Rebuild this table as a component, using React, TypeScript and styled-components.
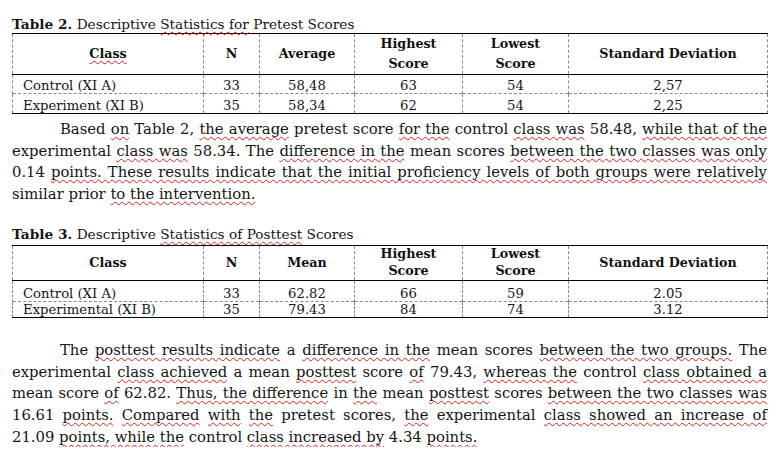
import React from "react";
import styled, { createGlobalStyle } from "styled-components";

const Global = createGlobalStyle`
  html, body { margin: 0; padding: 0; background: #ffffff; }
  body { font-family: "DejaVu Serif", "Liberation Serif", serif; color: #151515; }
`;

const Page = styled.div`
  width: 755px;
  padding: 15px 16px 0 12px;
`;

const Caption = styled.div<{ $gap: number }>`
  font-size: 13.7px;
  line-height: 18px;
  margin-top: ${(p) => p.$gap}px;
  white-space: nowrap;
`;

const Label = styled.b`
  font-weight: 700;
`;

const Misspelt = styled.span`
  text-decoration-line: underline;
  text-decoration-style: wavy;
  text-decoration-color: #e0201c;
  text-decoration-thickness: 1px;
  text-underline-offset: 2px;
  text-decoration-skip-ink: none;
`;

const Table = styled.table<{ $gap: number }>`
  width: 755px;
  margin-top: ${(p) => p.$gap}px;
  border-collapse: collapse;
  table-layout: fixed;
  border-top: 1px solid #000;
  border-bottom: 1px solid #000;
  border-left: 1px dashed #8a8a8a;
  border-right: 1px dashed #8a8a8a;
`;

const HeadRow = styled.tr<{ $h: number }>`
  height: ${(p) => p.$h}px;
  border-bottom: 1px solid #000;
`;

const HeadCell = styled.th<{ $lh: number }>`
  font-size: 12.7px;
  font-weight: 700;
  line-height: ${(p) => p.$lh}px;
  text-align: center;
  vertical-align: middle;
  padding: 0 4px;
  border-left: 1px dashed #8a8a8a;
  color: #111;
`;

const BodyRow = styled.tr<{ $h: number }>`
  height: ${(p) => p.$h}px;
  border-top: 1px dashed #8a8a8a;
`;

const Cell = styled.td<{ $left?: boolean }>`
  font-size: 13.2px;
  line-height: 15px;
  text-align: ${(p) => (p.$left ? "left" : "center")};
  vertical-align: bottom;
  padding: 0 0 0 ${(p) => (p.$left ? "10px" : "0")};
  border-left: 1px dashed #8a8a8a;
  white-space: nowrap;
`;

const Paragraph = styled.div<{ $gap: number }>`
  margin-top: ${(p) => p.$gap}px;
  font-size: 14.8px;
  line-height: 21.7px;
`;

const Line = styled.div<{ $first?: boolean; $last?: boolean }>`
  text-align: justify;
  text-align-last: ${(p) => (p.$last ? "left" : "justify")};
  padding-left: ${(p) => (p.$first ? "48px" : "0")};
`;

type Row = string[];

function StatTable({
  gap,
  headHeight,
  headLine,
  meanLabel,
  classLabel,
  rows,
  rowHeights,
}: {
  gap: number;
  headHeight: number;
  headLine: number;
  meanLabel: string;
  classLabel: React.ReactNode;
  rows: Row[];
  rowHeights: number[];
}) {
  return (
    <Table $gap={gap}>
      <colgroup>
        <col style={{ width: 191 }} />
        <col style={{ width: 56 }} />
        <col style={{ width: 95 }} />
        <col style={{ width: 108 }} />
        <col style={{ width: 106 }} />
        <col style={{ width: 199 }} />
      </colgroup>
      <thead>
        <HeadRow $h={headHeight}>
          <HeadCell $lh={headLine}>{classLabel}</HeadCell>
          <HeadCell $lh={headLine}>N</HeadCell>
          <HeadCell $lh={headLine}>{meanLabel}</HeadCell>
          <HeadCell $lh={headLine}>
            Highest
            <br />
            Score
          </HeadCell>
          <HeadCell $lh={headLine}>
            Lowest
            <br />
            Score
          </HeadCell>
          <HeadCell $lh={headLine}>Standard Deviation</HeadCell>
        </HeadRow>
      </thead>
      <tbody>
        {rows.map((r, i) => (
          <BodyRow key={i} $h={rowHeights[i]}>
            {r.map((c, j) => (
              <Cell key={j} $left={j === 0}>
                {c}
              </Cell>
            ))}
          </BodyRow>
        ))}
      </tbody>
    </Table>
  );
}

export default function App() {
  return (
    <>
      <Global />
      <Page>
        <Caption $gap={0}>
          <Label>Table 2.</Label> Descriptive <Misspelt>Statistics for</Misspelt> Pretest Scores
        </Caption>
        <StatTable
          gap={0}
          headHeight={39}
          headLine={20}
          meanLabel="Average"
          classLabel={<Misspelt>Class</Misspelt>}
          rows={[
            ["Control (XI A)", "33", "58,48", "63", "54", "2,57"],
            ["Experiment (XI B)", "35", "58,34", "62", "54", "2,25"],
          ]}
          rowHeights={[19, 20]}
        />
        <Paragraph $gap={4}>
          <Line $first>
            Based <Misspelt>on</Misspelt> Table 2, <Misspelt>the average</Misspelt> pretest score{" "}
            <Misspelt>for the</Misspelt> control <Misspelt>class was</Misspelt> 58.48,{" "}
            <Misspelt>while that of the</Misspelt>
          </Line>
          <Line>
            experimental <Misspelt>class was</Misspelt> 58.34. The <Misspelt>difference in the</Misspelt> mean
            scores <Misspelt>between the two classes was only</Misspelt>
          </Line>
          <Line>
            0.14{" "}
            <Misspelt>
              points. These results indicate that the initial proficiency levels of both groups were relatively
            </Misspelt>
          </Line>
          <Line $last>
            similar prior <Misspelt>to the intervention.</Misspelt>
          </Line>
        </Paragraph>
        <Caption $gap={20}>
          <Label>Table 3.</Label> Descriptive <Misspelt>Statistics of Posttest</Misspelt> Scores
        </Caption>
        <StatTable
          gap={2}
          headHeight={35}
          headLine={16.5}
          meanLabel="Mean"
          classLabel="Class"
          rows={[
            ["Control (XI A)", "33", "62.82", "66", "59", "2.05"],
            ["Experimental (XI B)", "35", "79.43", "84", "74", "3.12"],
          ]}
          rowHeights={[21, 16]}
        />
        <Paragraph $gap={21}>
          <Line $first>
            The <Misspelt>posttest results indicate</Misspelt> a <Misspelt>difference in the</Misspelt> mean scores{" "}
            <Misspelt>between the two groups.</Misspelt> The
          </Line>
          <Line>
            experimental <Misspelt>class achieved</Misspelt> a mean <Misspelt>posttest</Misspelt> score{" "}
            <Misspelt>of</Misspelt> 79.43, <Misspelt>whereas the</Misspelt> control{" "}
            <Misspelt>class obtained a</Misspelt>
          </Line>
          <Line>
            mean score <Misspelt>of</Misspelt> 62.82. <Misspelt>Thus, the difference</Misspelt> in{" "}
            <Misspelt>the</Misspelt> mean <Misspelt>posttest</Misspelt> scores{" "}
            <Misspelt>between the two classes was</Misspelt>
          </Line>
          <Line>
            16.61 <Misspelt>points.</Misspelt> <Misspelt>Compared</Misspelt> <Misspelt>with</Misspelt>{" "}
            <Misspelt>the</Misspelt> pretest scores, <Misspelt>the</Misspelt> experimental{" "}
            <Misspelt>class showed an increase of</Misspelt>
          </Line>
          <Line $last>
            21.09 <Misspelt>points, while the</Misspelt> control <Misspelt>class increased by</Misspelt> 4.34{" "}
            <Misspelt>points.</Misspelt>
          </Line>
        </Paragraph>
      </Page>
    </>
  );
}
